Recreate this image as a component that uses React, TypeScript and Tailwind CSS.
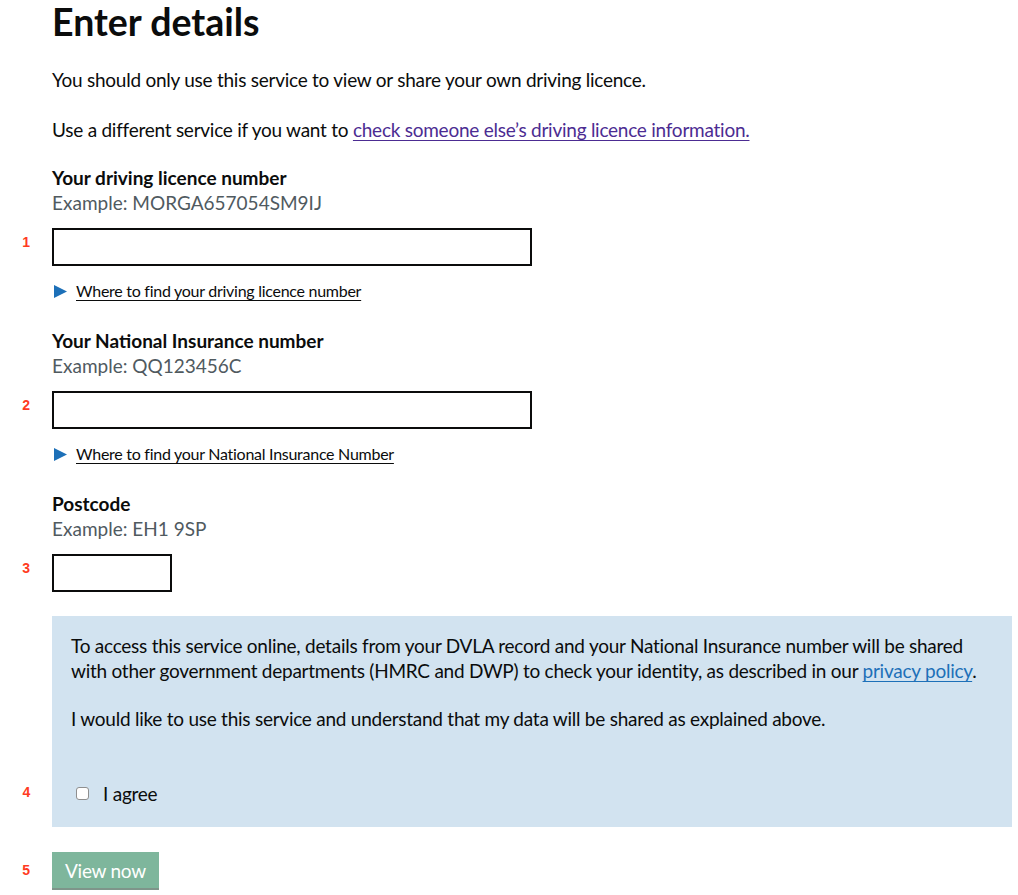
const font = { fontFamily: '"Lato", "Liberation Sans", sans-serif' };

const Marker = ({ n, className }: { n: number; className: string }) => (
  <span
    className={`absolute right-full mr-[22px] text-[14px] font-bold leading-none text-[#ff3b1f] ${className}`}
    style={{ fontFamily: '"Liberation Sans", Arial, sans-serif' }}
  >
    {n}
  </span>
);

const Field = ({
  n,
  label,
  hint,
  width,
  help,
}: {
  n: number;
  label: string;
  hint: string;
  width: string;
  help?: string;
}) => (
  <div className="mb-[27px]">
    <div className="text-[19px] font-bold leading-[25px]">{label}</div>
    <div className="text-[19px] leading-[25px] text-[#505a5f]">{hint}</div>
    <div className="relative mt-[13px]">
      <Marker n={n} className="top-[7px]" />
      <div className={`h-[38px] border-2 border-[#0b0c0c] bg-white ${width}`} />
    </div>
    {help && (
      <div className="mt-[15px] flex items-center text-[16px] leading-[20px] tracking-[-0.27px]">
        <svg className="ml-[2px] mr-[9px] h-[13px] w-[13px]" viewBox="0 0 13 13">
          <path d="M0 0 L13 6.5 L0 13 Z" fill="#1d70b8" />
        </svg>
        <span className="underline underline-offset-[3px]">{help}</span>
      </div>
    )}
  </div>
);

export default function App() {
  return (
    <div className="min-h-screen bg-white pl-[52px] pr-[6px] text-[#0b0c0c]" style={font}>
      <h1 className="pt-[2px] text-[37.5px] font-bold leading-[40px]">Enter details</h1>
      <div className="tracking-[-0.25px]">
        <p className="mt-[25px] text-[19px] leading-[25px]">
          You should only use this service to view or share your own driving licence.
        </p>
        <p className="mt-[25px] text-[19px] leading-[25px]">
          Use a different service if you want to{" "}
          <a href="#" className="text-[#4c2c92] underline underline-offset-[3px]">
            check someone else’s driving licence information.
          </a>
        </p>
      </div>
      <div className="mt-[23px]">
        <Field
          n={1}
          label="Your driving licence number"
          hint="Example: MORGA657054SM9IJ"
          width="w-[480px]"
          help="Where to find your driving licence number"
        />
        <Field
          n={2}
          label="Your National Insurance number"
          hint="Example: QQ123456C"
          width="w-[480px]"
          help="Where to find your National Insurance Number"
        />
        <Field n={3} label="Postcode" hint="Example: EH1 9SP" width="w-[120px]" />
      </div>
      <div className="-mt-[3px] bg-[#d2e3f0] px-[19px] pb-[21px] pt-[17px] text-[19px] leading-[25px] tracking-[-0.25px]">
        <p>
          To access this service online, details from your DVLA record and your National Insurance
          number will be shared with other government departments (HMRC and DWP) to check your
          identity, as described in our{" "}
          <a href="#" className="text-[#1d70b8] underline underline-offset-[3px]">
            privacy policy
          </a>
          .
        </p>
        <p className="mt-[23px]">
          I would like to use this service and understand that my data will be shared as explained
          above.
        </p>
        <label className="relative mt-[50px] flex items-center">
          <span className="absolute -left-[19px]">
            <Marker n={4} className="-top-[9px]" />
          </span>
          <span className="ml-[5px] mr-[14px] h-[13px] w-[13px] rounded-[3px] border border-[#8f8f8f] bg-white" />
          <span>I agree</span>
        </label>
      </div>
      <div className="relative mt-[25px] inline-block">
        <Marker n={5} className="top-[11px]" />
        <button className="bg-[#00703c] px-[13px] pb-[7px] pt-[8px] text-[19px] leading-[21px] tracking-[-0.25px] text-white opacity-50 shadow-[0_2px_0_#002d18]">
          View now
        </button>
      </div>
    </div>
  );
}
